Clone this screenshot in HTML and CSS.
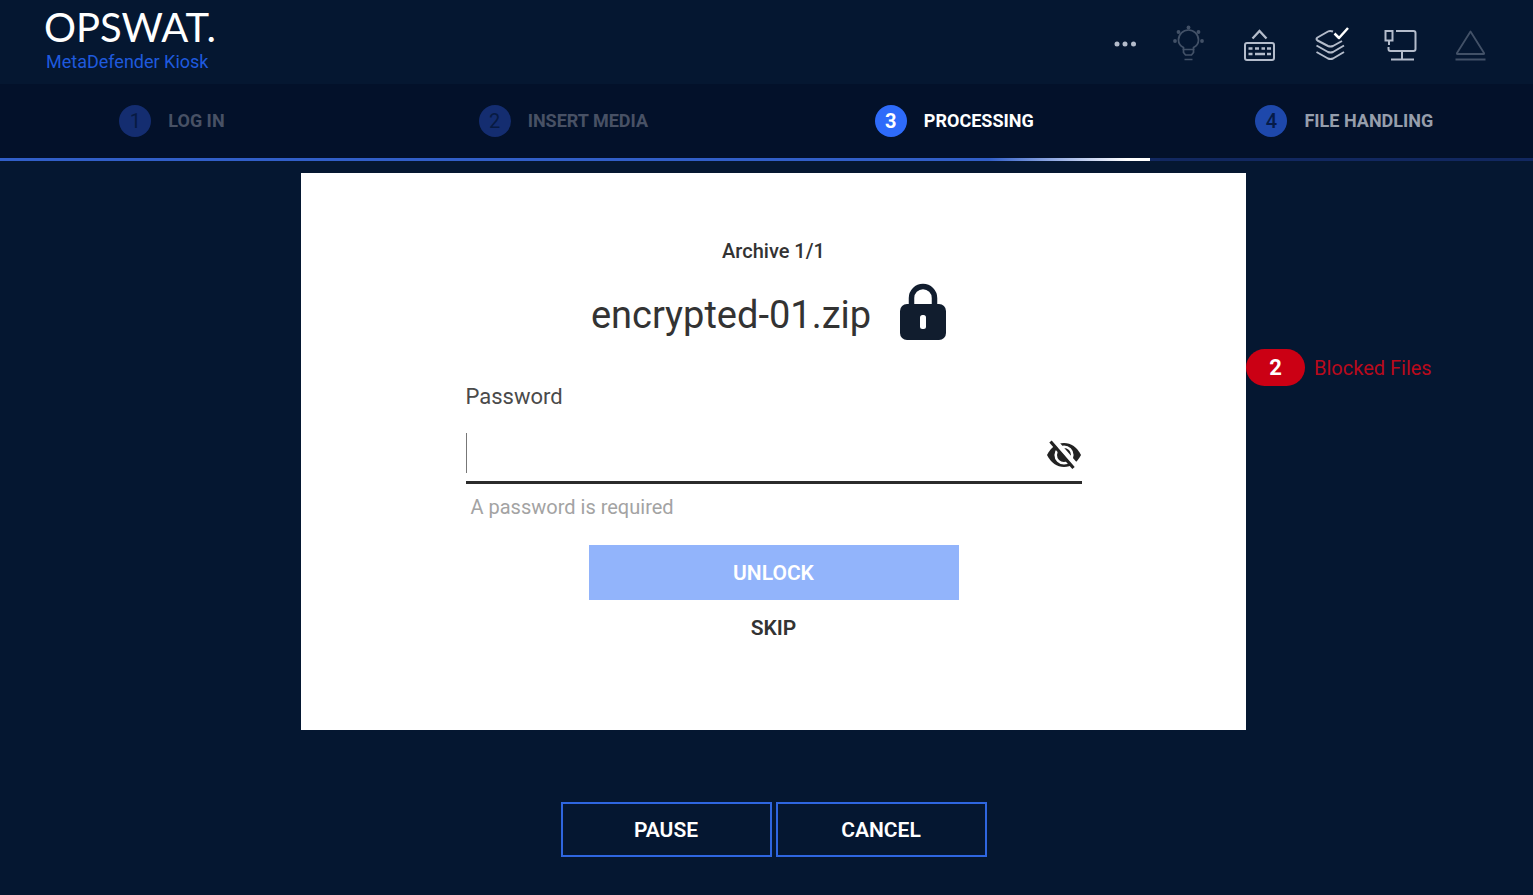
FILE: index.html
```html
<!DOCTYPE html>
<html lang="en">
<head>
  <meta charset="UTF-8">
  <meta name="viewport" content="width=device-width, initial-scale=1.0">
  <title>MetaDefender Kiosk</title>
  <link rel="stylesheet" href="styles.css">
</head>
<body>
  <!-- Header -->
  <header class="header">
    <div class="brand">
      <div class="logo">OPSWAT.</div>
      <div class="product">MetaDefender Kiosk</div>
    </div>
    <nav class="tools">
      <button type="button" class="tool" aria-label="More">
        <svg width="36" height="36" viewBox="0 0 36 36" fill="#b4bccb">
          <circle cx="14" cy="18" r="2.5"/><circle cx="22" cy="18" r="2.5"/><circle cx="30.500" cy="18" r="2.5"/>
        </svg>
      </button>
      <button type="button" class="tool dim" aria-label="Light">
        <svg width="36" height="36" viewBox="3 0 36 36" fill="none" stroke="#b4bccb" stroke-width="1.7">
          <path d="M13.500 24v-2.500C10.500 20 8.500 17.500 8.500 14a10 10 0 0 1 20 0c0 3.500-2 6-5 7.500V24"/>
          <path d="M13.500 23.500h10v3l-2 2.500h-6l-2-2.500zM14.500 33.500h8"/>
          <g fill="#b4bccb" stroke="none"><circle cx="18.500" cy="1.500" r="1.900"/><circle cx="8.500" cy="6" r="1.900"/><circle cx="28.500" cy="6" r="1.900"/><circle cx="5" cy="15" r="1.900"/><circle cx="32" cy="15" r="1.900"/></g>
        </svg>
      </button>
      <button type="button" class="tool" aria-label="Keyboard">
        <svg width="36" height="36" viewBox="2 -1 36 36" fill="none" stroke="#b4bccb" stroke-width="2">
          <path d="M11.500 11.500L18.500 4l7 7.500" stroke-width="2.300"/>
          <rect x="4" y="16" width="29" height="17" rx="2"/>
          <path d="M7.500 21.500h4m2.500 0h4m2.500 0h3.500m2 0h4M7.500 27h4m2.500 0h10m2 0h4" stroke-width="2.400"/>
        </svg>
      </button>
      <button type="button" class="tool" aria-label="Definitions up to date">
        <svg width="36" height="36" viewBox="0 -1 36 36" fill="none" stroke="#b4bccb" stroke-width="2" stroke-linejoin="round">
          <path d="M20 4.500q-3-1.200-5 0L4.500 10.500q-2 1.500 0 3L15 19q2.500 1.200 5 0l9-5"/>
          <path d="M3.500 18.500L15 25q2.500 1.200 5 0l11-6.500M3.500 25L15 31.500q2.500 1.200 5 0L31 25"/>
          <path d="M21.500 6.500l4.500 4.500L35 1" stroke="#fff" stroke-width="2.500"/>
        </svg>
      </button>
      <button type="button" class="tool" aria-label="Network">
        <svg width="36" height="36" viewBox="1 -1 36 36" fill="none" stroke="#b4bccb" stroke-width="2">
          <path d="M14 4h17.500q2 0 2 2v16q0 2-2 2h-23q-2 0-2-2v-2"/>
          <path d="M3.500 4h7v9.500h-7zM7 13.500V18M20 24v8M9 32.500h23"/>
        </svg>
      </button>
      <button type="button" class="tool dim" aria-label="Eject">
        <svg width="36" height="36" viewBox="1 -1 36 36" fill="none" stroke="#b4bccb" stroke-width="1.800" stroke-linejoin="round">
          <path d="M18.500 4.500L32 26q.5 1-.5 1H5.500q-1 0-.5-1zM3.500 32.500h30"/>
        </svg>
      </button>
    </nav>
  </header>

  <!-- Progress steps -->
  <ol class="steps">
    <li class="step first done"><span class="num">1</span>LOG IN</li>
    <li class="step done"><span class="num">2</span>INSERT MEDIA</li>
    <li class="step active"><span class="num">3</span>PROCESSING</li>
    <li class="step next"><span class="num">4</span>FILE HANDLING</li>
  </ol>
  <div class="track"><div class="track-fill"></div></div>

  <main class="content">
    <form class="panel">
      <div class="archive">Archive 1/1</div>
      <h1 class="file">
        encrypted-01.zip
        <svg width="46" height="57" viewBox="0 0 46 57">
          <path d="M11.500 24V14a11.500 11.500 0 0 1 23 0v10" fill="none" stroke="#111d2e" stroke-width="5.500"/>
          <rect y="20" width="46" height="36" rx="7" fill="#111d2e"/>
          <rect x="20" y="31" width="6" height="14" rx="2.500" fill="#fff"/>
        </svg>
      </h1>

      <div class="field">
        <label for="password">Password</label>
        <div class="input-row">
          <input type="password" id="password" required>
          <button type="button" class="eye" aria-label="Show password">
            <svg width="36" height="30" viewBox="0 0 36 30">
              <path d="M1 15C5 7 11 3 18 3s13 4 17 12c-4 8-10 12-17 12S5 23 1 15z" fill="#222"/>
              <circle cx="18" cy="15" r="8.300" fill="none" stroke="#fff" stroke-width="2.600"/>
              <path d="M17 11a4.500 4.500 0 0 1 5 5z" fill="#fff"/>
              <path d="M7.500-.5L30.500 26" stroke="#fff" stroke-width="5"/>
              <path d="M4.500 1.500L27.500 28" stroke="#222" stroke-width="3.200"/>
            </svg>
          </button>
        </div>
        <p class="hint">A password is required</p>
      </div>

      <button type="submit" class="unlock">UNLOCK</button>
      <button type="button" class="skip">SKIP</button>
    </form>

    <aside class="blocked">
      <span class="badge">2</span>
      <span>Blocked Files</span>
    </aside>

    <div class="actions">
      <button type="button" class="action">PAUSE</button>
      <button type="button" class="action">CANCEL</button>
    </div>
  </main>
</body>
</html>
```
FILE: styles.css
```css
* {
  box-sizing: border-box;
}

body {
  margin: 0;
  min-height: 100vh;
  background-color: #051731;
  color: #fff;
  font-family: Roboto, sans-serif;
  font-size: 20px;
  line-height: 24px;
}

button {
  padding: 0;
  border: none;
  background: none;
  font-family: inherit;
  font-size: 21px;
  font-weight: 600;
  cursor: pointer;
}

svg {
  display: block;
  overflow: visible;
}

/* Header */
.header {
  display: flex;
  justify-content: space-between;
  align-items: center;
  height: 84px;
  padding: 0 44px;
}

.brand {
  padding-bottom: 6px;
}

.logo {
  font-family: Lato, sans-serif;
  font-size: 40px;
  line-height: 46px;
}

.product {
  padding-left: 2px;
  color: #1f5ade;
  font-size: 18px;
}

.tools {
  display: flex;
  gap: 34px;
}

.tool {
  width: 36px;
  height: 36px;
  margin-top: 4px;
}

.dim {
  opacity: 0.35;
}

/* Steps */
.steps {
  display: grid;
  grid-template-columns: 24fr 25.5fr 25.5fr 25fr;
  height: 74px;
  margin: 0;
  padding: 0;
  list-style: none;
  background-color: #03112a;
}

.step {
  display: flex;
  justify-content: center;
  align-items: center;
  gap: 17px;
  font-size: 18px;
  font-weight: 700;
}

.first {
  padding-right: 24px;
}

.num {
  width: 32px;
  height: 32px;
  border-radius: 50%;
  background-color: #2e6bfa;
  font-size: 20px;
  line-height: 32px;
  text-align: center;
}

.done {
  color: #485165;
}

.done .num {
  background-color: #142d70;
  color: #071a42;
  font-weight: 400;
}

.next {
  padding-left: 6px;
  color: #969eac;
}

.next .num {
  background-color: #1e48ab;
  color: #061b48;
  font-weight: 500;
}

.track {
  height: 3px;
  background-color: #122860;
}

.track-fill {
  width: 75%;
  height: 3px;
  background: linear-gradient(to right, #325fc8 86%, #fff 98%);
}

/* Main area */
.content {
  display: grid;
  grid-template-columns: 301fr 945fr 287fr;
  padding: 12px 0 38px;
}

.panel {
  grid-column: 2;
  display: flex;
  flex-direction: column;
  align-items: center;
  padding: 62px 40px 86px;
  background-color: #fff;
  color: #333;
}

.archive {
  font-weight: 500;
  line-height: 32px;
}

.file {
  display: flex;
  align-items: flex-end;
  gap: 29px;
  margin: 17px 0 44px;
  padding-right: 10px;
  height: 57px;
  font-size: 38px;
  font-weight: 400;
  line-height: 51px;
}

.field {
  width: 100%;
  max-width: 616px;
}

.field label {
  display: block;
  color: #4a4a4a;
  font-size: 22px;
}

.input-row {
  display: flex;
  align-items: flex-end;
  margin-top: 24px;
  padding-bottom: 8px;
  border-bottom: 3px solid #2b2b2b;
}

.input-row input {
  flex: 1;
  height: 40px;
  border: none;
  border-left: 1px solid #777;
  outline: none;
  font-size: 22px;
}

.eye {
  padding-bottom: 3px;
}

.hint {
  margin: 11px 0 26px;
  padding-left: 5px;
  color: #a3a3a3;
}

.unlock {
  width: 100%;
  max-width: 370px;
  height: 55px;
  background-color: #92b4fb;
  color: #fff;
}

.skip {
  height: 32px;
  margin-top: 12px;
  color: #333;
}

.blocked {
  display: flex;
  align-items: center;
  align-self: start;
  gap: 9px;
  margin-top: 176px;
  color: #b90a1c;
}

.badge {
  width: 59px;
  border-radius: 19px;
  background-color: #cb0014;
  color: #fff;
  font-size: 22px;
  font-weight: 700;
  line-height: 37px;
  text-align: center;
}

.actions {
  grid-column: 2;
  display: flex;
  justify-content: center;
  gap: 4px;
  margin-top: 72px;
}

.action {
  width: 211px;
  height: 55px;
  border: 2px solid #2f66e0;
  color: #fff;
}
```
